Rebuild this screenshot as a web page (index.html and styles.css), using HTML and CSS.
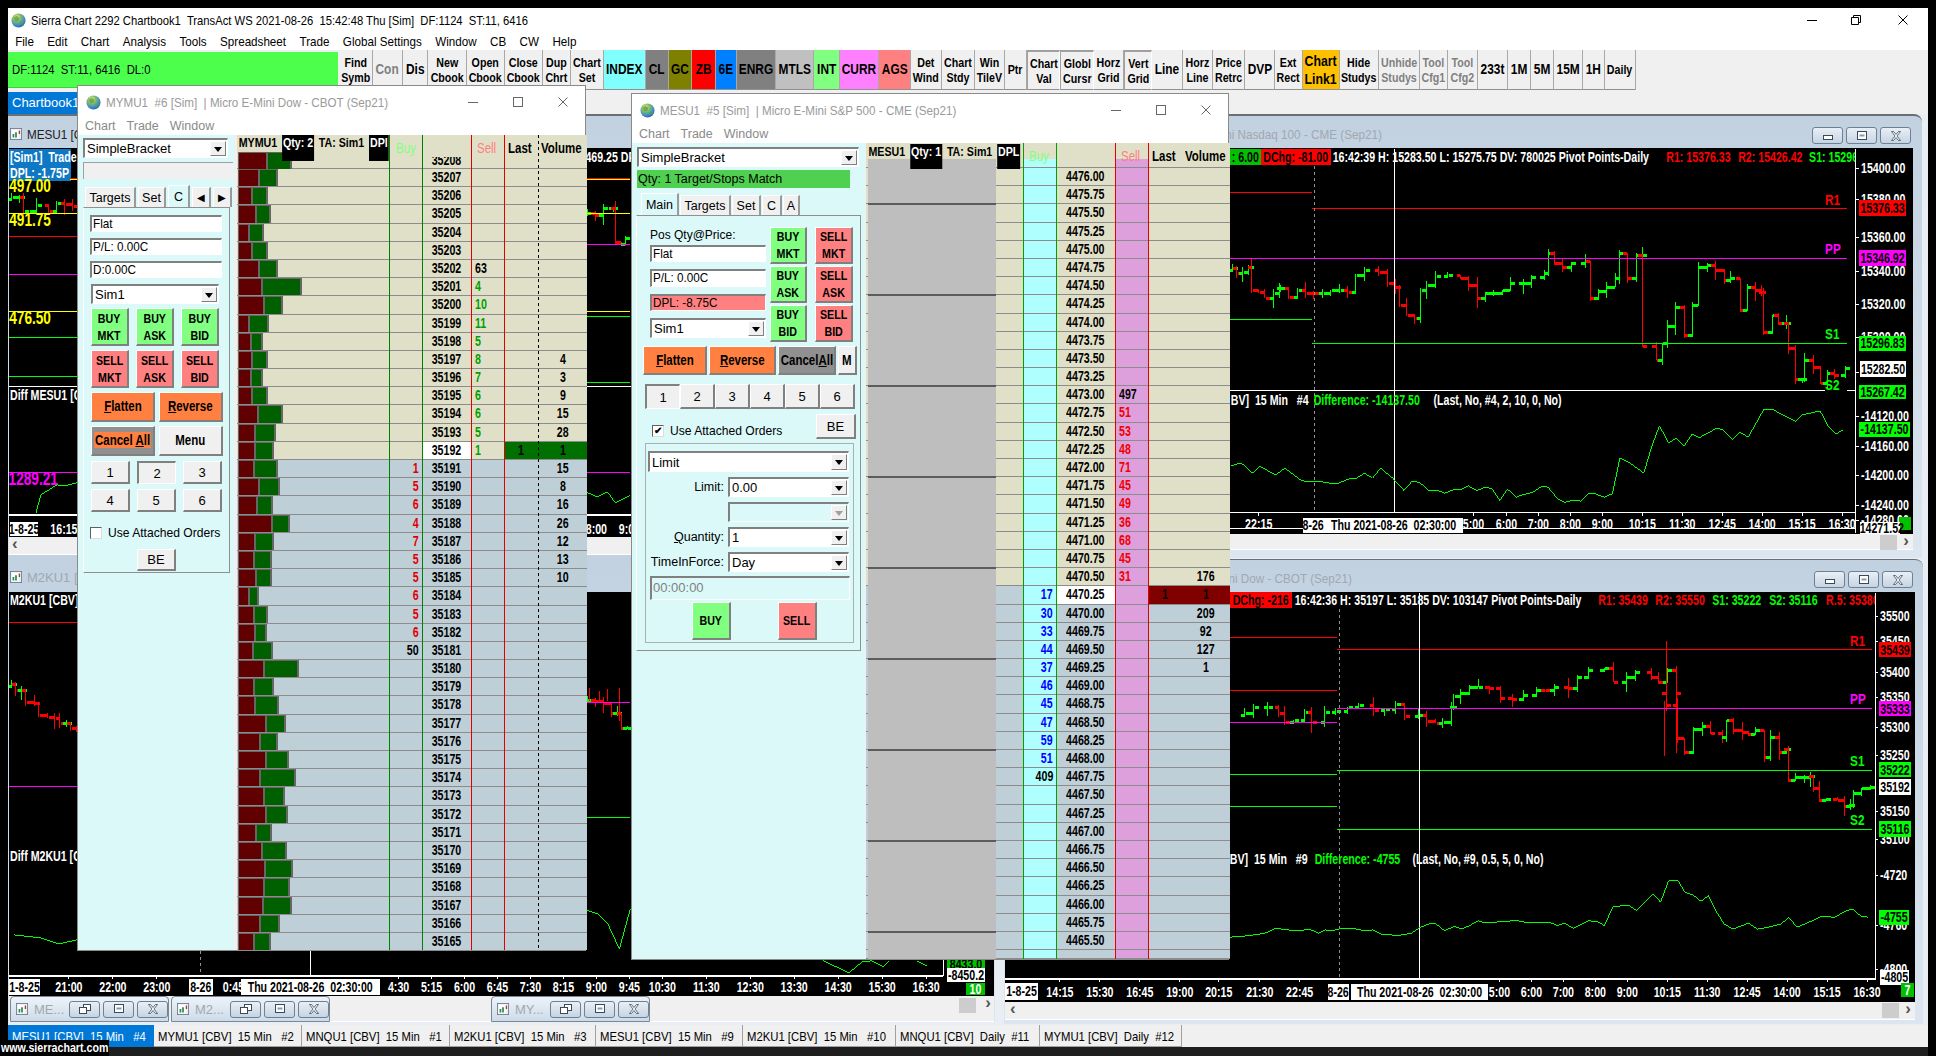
FILE: index.html
```html
<!DOCTYPE html>
<html lang="en">
<head>
<meta charset="utf-8">
<title>Sierra Chart</title>
<link rel="stylesheet" href="styles.css">
</head>
<body>
<svg class="defs" width="0" height="0">
  <defs>
    <radialGradient id="gl" cx="0.38" cy="0.28" r="0.85"><stop offset="0" stop-color="#f6f4b8"/><stop offset="0.3" stop-color="#8cc060"/><stop offset="0.65" stop-color="#3f8fc8"/><stop offset="1" stop-color="#14509c"/></radialGradient>
    <symbol id="globe" viewBox="0 0 16 16"><circle cx="8" cy="8" r="7.5" fill="url(#gl)"/><path d="M3 5l3-2 3 2-1 3-3 1zM10 10l3-1 1 1-3 3z" fill="#5aa040" opacity="0.8"/></symbol>
    <symbol id="chart-ico" viewBox="0 0 14 14"><rect x="0.5" y="0.5" width="13" height="13" fill="#e8eef4" stroke="#6a7a8a"/><rect x="2" y="2" width="8" height="10" fill="#fff"/><path d="M3 11V7h2v4zM6 11V5h2v6z" fill="#2a8a4a"/><path d="M11 3v4" stroke="#c03020" stroke-width="1.5"/></symbol>
    <symbol id="x-thin" viewBox="0 0 10 10"><path d="M0.5 0.5l9 9M9.5 0.5l-9 9" fill="none" stroke="currentColor"/></symbol>
    <symbol id="sq-thin" viewBox="0 0 10 10"><rect x="0.5" y="0.5" width="9" height="9" fill="none" stroke="currentColor"/></symbol>
    <symbol id="dash-thin" viewBox="0 0 10 10"><path d="M0 5.5h10" stroke="currentColor"/></symbol>
    <symbol id="rest-thin" viewBox="0 0 10 10"><path d="M2.5 2.5v-2h7v7h-2M0.5 2.5h7v7h-7z" fill="none" stroke="currentColor"/></symbol>
    <symbol id="m-min" viewBox="0 0 12 10"><rect x="1.5" y="4.5" width="9" height="4" fill="#fff" stroke="#3a4a5a"/></symbol>
    <symbol id="m-max" viewBox="0 0 12 10"><rect x="1.5" y="0.5" width="9" height="8" fill="#fff" stroke="#3a4a5a"/><rect x="3.5" y="3.5" width="5" height="2" fill="#8a9aaa"/></symbol>
    <symbol id="m-res" viewBox="0 0 12 10"><rect x="4.5" y="0.5" width="7" height="6" fill="#fff" stroke="#3a4a5a"/><rect x="0.5" y="3.5" width="7" height="6" fill="#fff" stroke="#3a4a5a"/></symbol>
    <symbol id="m-x" viewBox="0 0 12 10"><path d="M1.5 0.5h2l2.5 3 2.5-3h2l-3.5 4.5 3.5 4.5h-2l-2.5-3-2.5 3h-2l3.5-4.5z" fill="#fff" stroke="#3a4a5a" stroke-width="0.8"/></symbol>
  </defs>
</svg>

<div class="app">
  <header class="titlebar">
    <svg class="globe"><use href="#globe"/></svg>
    <span class="title-text">Sierra Chart 2292 Chartbook1  TransAct WS 2021-08-26  15:42:48 Thu [Sim]  DF:1124  ST:11, 6416</span>
    <div class="sys-btns">
      <svg class="sys"><use href="#dash-thin"/></svg>
      <svg class="sys"><use href="#rest-thin"/></svg>
      <svg class="sys sys-close"><use href="#x-thin"/></svg>
    </div>
  </header>
  <nav class="menubar"><div class="menu-inner"><span>File</span><span>Edit</span><span>Chart</span><span>Analysis</span><span>Tools</span><span>Spreadsheet</span><span>Trade</span><span>Global Settings</span><span>Window</span><span>CB</span><span>CW</span><span>Help</span></div></nav>
  <div class="toolrow">
    <div class="status"><span class="status-text">DF:1124  ST:11, 6416  DL:0</span></div>
    <div class="tools">
      <button>Find<br>Symb</button><button class="dim big">Con</button><button class="big">Dis</button><button>New<br>Cbook</button><button>Open<br>Cbook</button><button>Close<br>Cbook</button><button>Dup<br>Chrt</button><button>Chart<br>Set</button>
      <button class="big t-index">INDEX</button><button class="big t-gray">CL</button><button class="big t-olive">GC</button><button class="big t-red">ZB</button><button class="big t-blue">6E</button><button class="big t-gray">ENRG</button><button class="big t-silver">MTLS</button><button class="big t-green">INT</button><button class="big t-pink">CURR</button><button class="big t-salmon">AGS</button>
      <button>Det<br>Wind</button><button>Chart<br>Stdy</button><button>Win<br>TileV</button><button>Ptr</button><button class="on">Chart<br>Val</button><button class="on">Globl<br>Cursr</button><button>Horz<br>Grid</button><button class="on">Vert<br>Grid</button><button class="big">Line</button><button>Horz<br>Line</button><button>Price<br>Retrc</button><button class="big">DVP</button><button>Ext<br>Rect</button>
      <button class="link">Chart<br>Link1</button><button>Hide<br>Studys</button><button class="dim">Unhide<br>Studys</button><button class="dim">Tool<br>Cfg1</button><button class="dim">Tool<br>Cfg2</button><button class="big">233t</button><button class="big">1M</button><button class="big">5M</button><button class="big">15M</button><button class="big">1H</button><button>Daily</button>
    </div>
  </div>
  <div class="cbooktabs"><span class="cbook-active">Chartbook1</span></div>

  <main class="desktop">
    <section class="mdi win-a">
      <div class="mdi-title"><svg class="mdi-ico"><use href="#chart-ico"/></svg><span class="mdi-text on-text">MESU1 [CBV]  15 Min  #4  | Micro E-Mini S&amp;P 500 - CME (Sep21)</span></div>
      <svg class="chart chart-a" id="ca" viewBox="9 148 981 389"></svg>
      <div class="scroll scroll-a"><span class="arrow">‹</span></div>
    </section>
    <section class="mdi win-b">
      <div class="mdi-title title-b"><svg class="mdi-ico"><use href="#chart-ico"/></svg><span class="mdi-text">M2KU1 [CBV]  15 Min  #3</span></div>
      <svg class="chart chart-b" id="cb" viewBox="9 592 986 404"></svg>
      <div class="scroll scroll-b"><span class="sthumb thumb-b"></span><span class="arrow arrow-b">›</span></div>
    </section>
    <div class="mini mini-1"><svg class="mdi-ico"><use href="#chart-ico"/></svg><span class="mini-text">ME...</span><span class="capbtn"><svg><use href="#m-res"/></svg></span><span class="capbtn"><svg><use href="#m-max"/></svg></span><span class="capbtn"><svg><use href="#m-x"/></svg></span></div>
    <div class="mini mini-2"><svg class="mdi-ico"><use href="#chart-ico"/></svg><span class="mini-text">M2...</span><span class="capbtn"><svg><use href="#m-res"/></svg></span><span class="capbtn"><svg><use href="#m-max"/></svg></span><span class="capbtn"><svg><use href="#m-x"/></svg></span></div>
    <div class="mini mini-3"><svg class="mdi-ico"><use href="#chart-ico"/></svg><span class="mini-text">MY...</span><span class="capbtn"><svg><use href="#m-res"/></svg></span><span class="capbtn"><svg><use href="#m-max"/></svg></span><span class="capbtn"><svg><use href="#m-x"/></svg></span></div>

    <section class="mdi win-c">
      <div class="mdi-title title-c"><span class="mdi-text text-c">MNQU1 [CBV]  15 Min  #1  | Micro E-Mini Nasdaq 100 - CME (Sep21)</span><span class="capbtns"><span class="capbtn"><svg><use href="#m-min"/></svg></span><span class="capbtn"><svg><use href="#m-max"/></svg></span><span class="capbtn"><svg><use href="#m-x"/></svg></span></span></div>
      <svg class="chart chart-c" id="cc" viewBox="1004 148 909 386"></svg>
      <div class="scroll scroll-c"><span class="sthumb thumb-c"></span><span class="arrow">›</span></div>
    </section>
    <section class="mdi win-d">
      <div class="mdi-title title-d"><span class="mdi-text text-d">MYMU1 [CBV]  15 Min  #2  | Micro E-Mini Dow - CBOT (Sep21)</span><span class="capbtns"><span class="capbtn"><svg><use href="#m-min"/></svg></span><span class="capbtn"><svg><use href="#m-max"/></svg></span><span class="capbtn"><svg><use href="#m-x"/></svg></span></span></div>
      <svg class="chart chart-d" id="cd" viewBox="1004 592 911 410"></svg>
      <div class="scroll scroll-d"><span class="arrow">‹</span><span class="sthumb thumb-d"></span><span class="arrow">›</span></div>
    </section>

    <section class="float float-my">
      <div class="ftitle"><svg class="globe"><use href="#globe"/></svg><span class="ftext">MYMU1  #6 [Sim]  | Micro E-Mini Dow - CBOT (Sep21)</span><span class="fbtns"><svg class="sys"><use href="#dash-thin"/></svg><svg class="sys"><use href="#sq-thin"/></svg><svg class="sys"><use href="#x-thin"/></svg></span></div>
      <div class="fmenu"><span>Chart</span><span>Trade</span><span>Window</span></div>
      <div class="fclient">
        <aside class="panel panel-my">
          <div class="combo cmb-my1">SimpleBracket<i class="drop"></i></div>
          <div class="blank-my"></div>
          <div class="tabs tabs-my"><span class="tab t-targets">Targets</span><span class="tab t-set">Set</span><span class="tab tab-on t-c">C</span><span class="tab t-arrow">◀</span><span class="tab t-arrow">▶</span></div>
          <div class="grp grp-my">
            <div class="edit"><span class="et">Flat</span></div>
            <div class="edit"><span class="et">P/L: 0.00C</span></div>
            <div class="edit"><span class="et">D:0.00C</span></div>
            <div class="combo cmb-my2">Sim1<i class="drop"></i></div>
            <div class="btnrow row-buy"><button class="tbtn buy">BUY<br>MKT</button><button class="tbtn buy">BUY<br>ASK</button><button class="tbtn buy">BUY<br>BID</button></div>
            <div class="btnrow row-sell"><button class="tbtn sell">SELL<br>MKT</button><button class="tbtn sell">SELL<br>ASK</button><button class="tbtn sell">SELL<br>BID</button></div>
            <div class="btnrow two row-act"><button class="tbtn orange"><u>F</u>latten</button><button class="tbtn orange"><u>R</u>everse</button></div>
            <div class="btnrow two row-act"><button class="tbtn grayb"><b class="orange-txt">Cancel <u>A</u>ll</b></button><button class="tbtn plain">Menu</button></div>
            <div class="numgrid"><button class="nb">1</button><button class="nb nb-on">2</button><button class="nb">3</button><button class="nb">4</button><button class="nb">5</button><button class="nb">6</button></div>
            <label class="check check-my"><i class="cbx"></i><span class="check-text">Use Attached Orders</span></label>
            <button class="nb be-my">BE</button>
          </div>
        </aside>
        <div class="ladder lad-my" id="ladmy">
          <div class="lhead">
            <div class="lgroup"><b>MYMU1</b><b class="blk">Qty: 2</b><b>TA: Sim1</b><b class="blk">DPl</b></div>
            <div class="lh-buy">Buy</div><div></div><div class="lh-sell">Sell</div><div class="lh-last">Last</div><div class="lh-vol">Volume</div>
          </div>
          <i class="vl my-1"></i><i class="vl my-2"></i><i class="vl vr my-3"></i><i class="vl vr my-4"></i><i class="vl vd my-5"></i>
        </div>
      </div>
    </section>

    <section class="float float-es">
      <div class="ftitle"><svg class="globe"><use href="#globe"/></svg><span class="ftext">MESU1  #5 [Sim]  | Micro E-Mini S&amp;P 500 - CME (Sep21)</span><span class="fbtns"><svg class="sys"><use href="#dash-thin"/></svg><svg class="sys"><use href="#sq-thin"/></svg><svg class="sys"><use href="#x-thin"/></svg></span></div>
      <div class="fmenu"><span>Chart</span><span>Trade</span><span>Window</span></div>
      <div class="fclient">
        <aside class="panel panel-es">
          <div class="combo cmb-es1">SimpleBracket<i class="drop"></i></div>
          <div class="qtybar">Qty: 1 Target/Stops Match</div>
          <div class="tabs tabs-es"><span class="tab tab-on t-main">Main</span><span class="tab t-tg2">Targets</span><span class="tab t-set2">Set</span><span class="tab t-c2">C</span><span class="tab t-a2">A</span></div>
          <div class="grp grp-es">
            <div class="es-top">
              <div class="es-fields">
                <div class="lbl-pos">Pos Qty@Price:</div>
                <div class="edit es-flat"><span class="et">Flat</span></div>
                <div class="edit es-pl"><span class="et">P/L: 0.00C</span></div>
                <div class="edit es-dpl"><span class="et">DPL: -8.75C</span></div>
                <div class="combo cmb-es2">Sim1<i class="drop"></i></div>
              </div>
              <div class="es-btns">
                <button class="tbtn buy">BUY<br>MKT</button><button class="tbtn sell">SELL<br>MKT</button>
                <button class="tbtn buy">BUY<br>ASK</button><button class="tbtn sell">SELL<br>ASK</button>
                <button class="tbtn buy">BUY<br>BID</button><button class="tbtn sell">SELL<br>BID</button>
              </div>
            </div>
            <div class="es-act"><button class="tbtn orange"><u>F</u>latten</button><button class="tbtn orange"><u>R</u>everse</button><button class="tbtn grayb">Cancel<u>A</u>ll</button><button class="tbtn plain">M</button></div>
            <div class="es-nums"><button class="nb nb-on">1</button><button class="nb">2</button><button class="nb">3</button><button class="nb">4</button><button class="nb">5</button><button class="nb">6</button></div>
            <div class="es-attach"><label class="check check-es"><i class="cbx cbx-on">✔</i><span class="check-text">Use Attached Orders</span></label><button class="nb be-es">BE</button></div>
            <div class="order">
              <div class="combo cmb-type">Limit<i class="drop"></i></div>
              <div class="ofield"><span class="olabel">Limit:</span><div class="combo">0.00<i class="drop"></i></div></div>
              <div class="ofield"><span class="olabel"></span><div class="combo combo-off"><i class="drop"></i></div></div>
              <div class="ofield"><span class="olabel"><u>Q</u>uantity:</span><div class="combo">1<i class="drop"></i></div></div>
              <div class="ofield"><span class="olabel">TimeInForce:</span><div class="combo">Day<i class="drop"></i></div></div>
              <div class="edit edit-off">00:00:00</div>
              <div class="osend"><button class="tbtn buy big-send">BUY</button><button class="tbtn sell big-send">SELL</button></div>
            </div>
          </div>
        </aside>
        <div class="ladder lad-es" id="lades">
          <div class="lhead">
            <div class="lgroup"><b>MESU1</b><b class="blk">Qty: 1</b><b>TA: Sim1</b><b class="blk">DPL</b></div>
            <div class="lh-buy">Buy</div><div></div><div class="lh-sell">Sell</div><div class="lh-last">Last</div><div class="lh-vol">Volume</div>
          </div>
          <div class="depth"></div>
          <i class="vl es-1"></i><i class="vl es-2"></i><i class="vl vr es-3"></i><i class="vl vr es-4"></i>
        </div>
      </div>
    </section>
  </main>

  <div class="charttabs">
    <span class="ctab ctab-on">MESU1 [CBV]  15 Min   #4</span><span class="ctab">MYMU1 [CBV]  15 Min   #2</span><span class="ctab">MNQU1 [CBV]  15 Min   #1</span><span class="ctab">M2KU1 [CBV]  15 Min   #3</span><span class="ctab">MESU1 [CBV]  15 Min   #9</span><span class="ctab">M2KU1 [CBV]  15 Min   #10</span><span class="ctab">MNQU1 [CBV]  Daily  #11</span><span class="ctab">MYMU1 [CBV]  Daily  #12</span>
  </div>
  <div class="darkstrip"></div>
</div>
<div class="site"><span>www.sierrachart.com</span></div>
<script src="app.js"></script>
</body>
</html>
```
FILE: styles.css
```css
:root {
  --ui: "Liberation Sans", Arial, sans-serif;
  --cyan: #dcf9f9;
  --face: #f0f0f0;
  --narrow: 0.82;
}
* { box-sizing: border-box; }
html, body { margin: 0; height: 100%; background: #000; overflow: hidden; }
body { font: 13px var(--ui); color: #000; width: 1936px; height: 1056px; position: relative; }
.defs { position: absolute; }
button { font: inherit; margin: 0; padding: 0; color: inherit; cursor: default; }

/* condensed text: no narrow family is installed, so glyphs are squeezed horizontally */
.nx { display: inline-block; transform: scaleX(var(--narrow)); white-space: pre; flex: none; }
.nx-l { transform-origin: left center; }
.nx-r { transform-origin: right center; }

.app { margin: 8px 8px 0; width: 1920px; height: 1048px; background: var(--face); display: flex; flex-direction: column; }
.titlebar { height: 24px; background: #fff; display: flex; align-items: center; padding-left: 3px; flex: none; }
.globe { width: 15px; height: 15px; flex: none; }
.title-text { margin-left: 5px; font-size: 13px; white-space: pre; transform: scaleX(0.864); transform-origin: left center; }
.sys-btns { margin-left: auto; display: flex; gap: 34px; margin-right: 20px; color: #000; }
.sys { width: 10px; height: 10px; flex: none; }
.sys-close { margin-left: 3px; }
.menubar { height: 18px; background: #fff; flex: none; }
.menu-inner { display: flex; gap: 15px; padding-left: 8px; align-items: center; height: 18px; font-size: 13px; transform: scaleX(0.895); transform-origin: left center; }
.toolrow { height: 40px; display: flex; flex: none; }
.status { width: 330px; margin: 2px 0; background: #4cff4c; padding-left: 4px; line-height: 36px; white-space: pre; border-bottom: 1px solid #40d040; }
.status-text { display: inline-block; transform: scaleX(0.87); transform-origin: left center; }
.tools { margin-left: 2px; display: grid; grid-template-columns: 33px 30px 25px 39px 38px 38px 28px 33px 42px 23px 23px 24px 21px 39px 38px 26px 39px 32px 31px 33px 30px 22px 33px 34px 30px 28px 31px 30px 32px 30px 28px 37px 39px 41px 28px 30px 30px 23px 23px 29px 22px 31px; height: 40px; }
.tools button { display: flex; align-items: center; justify-content: center; font: 700 13px/15px var(--ui); background: var(--face); border: 0; border-right: 1px solid #a8a8a8; border-bottom: 1px solid #909090; overflow: hidden; text-align: center; }
.tools .big { font-size: 14.5px; }
.tools .dim { color: #808080; }
.tools .on { background: #f0f0f0; border-top: 2px solid #a0a0a0; border-left: 1px solid #a0a0a0; border-right: 1px solid #fff; }
.tools .t-index { background: #80ffff; }
.tools .t-gray { background: #808080; }
.tools .t-olive { background: #808000; }
.tools .t-red { background: #ff0000; }
.tools .t-blue { background: #0080ff; }
.tools .t-silver { background: #c0c0c0; }
.tools .t-green { background: #80ff80; }
.tools .t-pink { background: #ff80ff; }
.tools .t-salmon { background: #ff8080; }
.tools .link { background: #ffc000; font-size: 15px; line-height: 18px; }

.cbooktabs { height: 24px; padding-top: 2px; flex: none; }
.cbook-active { display: block; width: 90px; height: 22px; background: #0078d7; color: #fff; line-height: 22px; padding-left: 4px; font-size: 13px; }

.desktop { flex: none; height: 911px; position: relative; background: #e8eef4; }
.charttabs { height: 22px; flex: none; display: grid; grid-template-columns: 146px 148px 148px 146px 147px 153px 144px 142px; background: var(--face); }
.ctab { white-space: pre; padding-left: 4px; line-height: 23px; border-right: 1px solid #a0a0a0; border-bottom: 1px solid #a0a0a0; overflow: hidden; background: var(--face); --narrow: 0.87; }
.ctab-on { background: #0078d7; color: #fff; border: 0; }
.darkstrip { flex: none; height: 9px; background: #1e1e1e; }
.site { position: absolute; left: 0; bottom: 0; width: 109px; height: 16px; background: #000; color: #fff; font: 700 13px/16px var(--ui); padding-left: 1px; white-space: pre; }
.site span { display: inline-block; transform: scaleX(0.82); transform-origin: left center; }

/* MDI child windows */
.mdi { position: absolute; display: flex; flex-direction: column; background: linear-gradient(#c2d1e0, #dbe6f0); border-top: 2px solid #6a6f75; padding: 0 1px; }
.win-a { left: 0; top: 0; width: 982px; height: 441px; }
.win-b { left: 0; top: 441px; width: 987px; height: 467px; border-top: 0; }
.win-c { left: 996px; top: 0; width: 918px; height: 444px; border-radius: 0 8px 0 0; padding-right: 9px; }
.win-d { left: 996px; top: 445px; width: 919px; height: 465px; border-radius: 0 8px 0 0; border-top-width: 1px; padding-right: 8px; }
.mdi-title { height: 32px; flex: none; display: flex; align-items: center; padding: 4px 0 0 1px; position: relative; }
.title-b { height: 37px; padding-top: 7px; }
.mdi-ico { width: 12px; height: 12px; flex: none; }
.mdi-text { margin-left: 5px; color: #a0a8b0; white-space: pre; font-size: 13px; }
.on-text { color: #202020; transform: scaleX(0.9); transform-origin: left center; }
.text-c { position: absolute; right: 531px; transform: scaleX(0.9); transform-origin: right center; }
.text-d { position: absolute; right: 563px; transform: scaleX(0.9); transform-origin: right center; }
.capbtns { position: absolute; right: 2px; top: 11px; display: flex; gap: 3px; }
.capbtn { width: 31px; height: 17px; flex: none; display: flex; align-items: center; justify-content: center; border: 1px solid #6e8094; border-radius: 3px; background: linear-gradient(#e8eff6, #c6d4e2); }
.capbtn svg { width: 12px; height: 10px; }
.chart { display: block; background: #000; flex: none; shape-rendering: crispEdges; }
.chart-a { width: 980px; height: 389px; }
.chart-b { width: 985px; height: 404px; }
.chart-c { width: 908px; height: 386px; }
.chart-d { width: 910px; height: 410px; }
.scroll { flex: none; height: 18px; background: var(--face); position: relative; border-bottom: 1px solid #fff; }
.scroll-b { height: 26px; }
.scroll-c { height: 16px; }
.arrow { position: absolute; left: 3px; top: -3px; font: 700 17px/20px var(--ui); color: #555; }
.scroll-c .arrow { left: auto; right: 4px; }
.arrow-b { left: auto; right: 3px; }
.scroll-d .arrow:first-child { left: 5px; }
.scroll-d .arrow:last-child { left: auto; right: 4px; }
.sthumb { position: absolute; top: 1px; height: 15px; width: 17px; background: #cdcdcd; }
.thumb-b { right: 18px; top: 2px; }
.thumb-c { right: 16px; }
.thumb-d { right: 16px; }

.mini { position: absolute; top: 882px; height: 26px; width: 159px; display: flex; align-items: center; gap: 3px; padding-left: 5px; background: linear-gradient(#eef3f8, #cddbe9); border: 1px solid #7a8794; border-radius: 4px 4px 0 0; }
.mini-1 { left: 2px; }
.mini-2 { left: 163px; }
.mini-3 { left: 483px; }
.mini-text { color: #a0a8b0; width: 34px; margin-left: 3px; font-size: 13px; }

/* floating windows */
.float { position: absolute; background: #fff; border: 1px solid #8a8a8a; display: flex; flex-direction: column; }
.float-my { left: 69px; top: -29px; width: 509px; height: 866px; }
.float-es { left: 623px; top: -21px; width: 598px; height: 867px; }
.ftitle { height: 32px; flex: none; display: flex; align-items: center; padding-left: 8px; }
.ftext { margin-left: 5px; color: #9a9a9a; font-size: 13px; white-space: pre; transform: scaleX(0.895); transform-origin: left center; }
.fbtns { margin-left: auto; display: flex; gap: 35px; margin-right: 17px; color: #666; }
.fmenu { height: 17px; flex: none; display: flex; gap: 11px; padding-left: 7px; color: #8a8a8a; font-size: 12.5px; line-height: 16px; }
.fclient { flex: 1; min-height: 0; display: flex; background: #f0f0f0; }

/* order panels */
.panel { flex: none; background: var(--cyan); font-size: 13px; display: flex; flex-direction: column; align-items: flex-start; }
.panel-my { width: 156px; padding: 3px 0 0 5px; }
.panel-es { width: 233px; padding: 4px 0 0 4px; }
.combo { display: flex; align-items: center; background: #fff; border: 1px solid; border-color: #808080 #fff #fff #808080; border-top-width: 2px; border-left-width: 2px; padding-left: 2px; height: 20px; position: relative; white-space: pre; overflow: hidden; }
.drop { position: absolute; right: 1px; top: 1px; bottom: 1px; width: 16px; background: var(--face); border: 1px solid; border-color: #fff #808080 #808080 #fff; }
.drop::after { content: ""; position: absolute; left: 3px; top: 5px; border: 4px solid transparent; border-top: 5px solid #000; border-bottom: 0; }
.combo-off { background: var(--cyan); }
.combo-off .drop::after { border-top-color: #a0a0a0; }
.cmb-my1 { width: 145px; }
.blank-my { width: 150px; height: 17px; margin-top: 4px; background: var(--face); border-left: 1px solid #a0a0a0; border-top: 1px solid #a0a0a0; }
.tabs { display: flex; align-items: flex-end; }
.tabs-my { height: 22px; margin: 6px 0 0 2px; gap: 2px; }
.tab { display: flex; align-items: center; justify-content: center; background: var(--face); height: 20px; border-top: 1px solid #fff; border-left: 1px solid #fff; border-right: 2px solid #9a9a9a; font-size: 12.5px; }
.tab-on { height: 22px; background: var(--cyan); }
.t-targets { width: 51px; }
.t-set { width: 28px; }
.t-c { width: 22px; }
.t-arrow { width: 19px; margin-left: 0; font-size: 10px; }
.grp { border: 1px solid; border-color: #fff #909090 #909090 #fff; border-top: 1px solid #909090; }
.grp-my { width: 147px; height: 366px; padding: 7px 0 0 6px; display: flex; flex-direction: column; align-items: flex-start; }
.edit { width: 132px; height: 17px; background: #fff; border: 1px solid; border-color: #808080 #fff #fff #808080; border-top-width: 2px; border-left-width: 2px; line-height: 14px; padding-left: 1px; white-space: pre; margin-bottom: 6px; }
.et { display: inline-block; transform: scaleX(0.9); transform-origin: left center; }
.cmb-my2 { width: 128px; margin-left: 1px; }
.btnrow { display: flex; gap: 7px; margin-left: 1px; }
.tbtn { display: flex; align-items: center; justify-content: center; border: 1px solid; border-color: #fff #808080 #808080 #fff; border-right-width: 2px; border-bottom-width: 2px; font: 700 13px/17px var(--ui); text-align: center; overflow: hidden; }
.buy { background: #80ff80; }
.sell { background: #ff8080; }
.orange { background: #ff8040; font-size: 14px; }
.grayb { background: #909090; font-size: 14px; }
.plain { background: var(--face); font-size: 14px; }
.orange-txt { background: #ff8040; padding: 0 1px; }
.row-buy { margin-top: 4px; }
.row-buy .tbtn, .row-sell .tbtn { width: 38px; height: 38px; }
.row-sell { margin-top: 4px; }
.row-act { margin-top: 4px; gap: 4px; }
.row-act .tbtn { width: 64px; height: 30px; }
.numgrid { display: grid; grid-template-columns: repeat(3, 39px); column-gap: 7px; row-gap: 5px; margin: 5px 0 0 1px; }
.nb { background: var(--face); border: 1px solid; border-color: #fff #808080 #808080 #fff; border-right-width: 2px; border-bottom-width: 2px; height: 23px; font-size: 13px; }
.nb-on { border-color: #808080 #fff #fff #808080; border-width: 2px 1px 1px 2px; }
.check { display: flex; align-items: center; white-space: nowrap; }
.check-my { margin-top: 13px; }
.check-es { margin-top: 8px; }
.check-text { display: inline-block; transform: scaleX(0.93); transform-origin: left center; }
.cbx { width: 12px; height: 12px; flex: none; background: #fff; border: 1px solid #606060; border-right-color: #ddd; border-bottom-color: #ddd; margin-right: 6px; font: 700 10px/10px var(--ui); text-align: center; font-style: normal; }
.be-my { width: 39px; height: 22px; margin: 9px 0 0 47px; }

/* ES panel */
.cmb-es1 { width: 222px; margin-left: 1px; }
.qtybar { width: 213px; height: 18px; margin: 3px 0 0 1px; background: #50d050; line-height: 18px; padding-left: 1px; font-size: 12.5px; }
.tabs-es { height: 22px; margin: 5px 0 0 5px; gap: 1px; }
.t-main { width: 38px; }
.t-tg2 { width: 51px; }
.t-set2 { width: 29px; }
.t-c2 { width: 20px; }
.t-a2 { width: 17px; }
.grp-es { width: 225px; height: 436px; padding: 11px 0 0 6px; display: flex; flex-direction: column; align-items: flex-start; }
.es-top { display: flex; }
.es-fields { width: 120px; margin-left: 7px; display: flex; flex-direction: column; align-items: flex-start; }
.lbl-pos { height: 18px; line-height: 16px; white-space: pre; font-size: 12px; }
.es-flat { width: 116px; margin-bottom: 7px; }
.es-pl { width: 116px; height: 18px; margin-bottom: 7px; }
.es-dpl { width: 116px; background: #ff8080; margin-bottom: 7px; }
.cmb-es2 { width: 116px; }
.es-btns { display: grid; grid-template-columns: 37px 38px; column-gap: 8px; grid-auto-rows: 37px; row-gap: 2px; }
.es-act { display: grid; grid-template-columns: 64px 67px 58px 19px; column-gap: 2px; margin-top: 4px; height: 29px; }
.es-nums { display: grid; grid-template-columns: repeat(6, 35px); margin: 9px 0 0 2px; }
.es-nums .nb { height: 25px; }
.es-attach { display: flex; width: 204px; align-items: center; justify-content: space-between; margin: 5px 0 0 9px; height: 25px; }
.be-es { width: 40px; height: 25px; }
.order { width: 209px; height: 200px; margin: 4px 0 0 2px; border: 1px solid #a8b0b0; padding: 7px 0 0 2px; display: flex; flex-direction: column; }
.cmb-type { width: 201px; height: 21px; margin-bottom: 5px; }
.ofield { display: flex; align-items: center; gap: 4px; height: 20px; margin-bottom: 5px; }
.ofield .combo { width: 121px; height: 20px; }
.olabel { width: 76px; text-align: right; white-space: nowrap; font-size: 12.5px; flex: none; }
.edit-off { width: 200px; height: 24px; background: var(--cyan); color: #808080; line-height: 20px; margin: -1px 0 2px 2px; }
.osend { display: flex; gap: 47px; margin-left: 44px; }
.big-send { width: 39px; height: 38px; }

/* ladders */
.ladder { position: relative; flex: none; overflow: hidden; }
.lad-my { width: 350px; margin-left: 3px; }
.lad-es { width: 364px; margin-left: 1px; }
.lhead, .row { display: grid; }
.lad-my .lhead, .lad-my .row { grid-template-columns: 153px 32px 49px 33px 34px 49px; }
.lad-es .lhead, .lad-es .row { grid-template-columns: 157px 33px 59px 33px 34px 48px; }
.lhead { height: 17px; background: #e0e0c8; font: 700 14px/26px var(--ui); position: relative; z-index: 2; }
.lad-es .lhead { height: 16px; }
.lgroup { display: flex; gap: 6px; padding-left: 2px; font: 700 13px/16px var(--ui); overflow: hidden; white-space: nowrap; width: 186px; transform: scaleX(var(--narrow)); transform-origin: left center; }
.lad-es .lgroup { width: 191px; padding: 1px 0 0 3px; }
.blk { background: #000; color: #fff; padding: 0 1px; }
.lh-buy { color: #80ff80; padding-left: 6px; font-weight: 400; }
.lh-sell { color: #ff8080; padding-left: 6px; font-weight: 400; }
.lh-last { padding-left: 4px; }
.lh-vol { padding-left: 3px; }
.row { height: 18.19px; border-bottom: 1px solid #8c8c8c; font: 700 14px/17px var(--ui); --narrow: 0.76; }
.row.part { height: 9px; }
.row.first { height: 17px; }
.row.a { background: #e0e0c8; }
.row.b { background: #bfcfd7; }
.row > div { min-width: 0; white-space: nowrap; }
.bars { display: flex; padding-left: 1px; }
.bars i { display: block; height: 100%; border: 1px solid #666; border-bottom-width: 0; }
.bars .r { background: #600000; }
.bars .g { background: #006000; border-right-width: 2px; }
.c-buy { text-align: right; padding-right: 3px; color: #e00000; }
.c-price { text-align: center; }
.c-price.hot { background: #fff; }
.c-sell { padding-left: 4px; color: #00a000; }
.c-last, .c-vol { text-align: center; }
.c-last.fill-g, .c-vol.fill-g { background: #007000; }
.c-last.fill-r, .c-vol.fill-r { background: #800000; }
.lad-es .c-buy { background: #b0ffff; color: #0000ff; }
.lad-es .c-sell { background: #dda0dd; color: #f00000; }
.lad-es .dark, .lad-my .dark { color: #000; }
.clip { clip-path: inset(5px 0 0 0); }
.vl { position: absolute; top: 0; bottom: 0; width: 1px; background: #00a000; z-index: 3; }
.vr { background: #e00000; }
.vd { background: repeating-linear-gradient(#000 0 3px, transparent 3px 6px); }
.my-1 { left: 152px; background: #008000; }
.my-2 { left: 185px; background: #008000; }
.my-3 { left: 234px; }
.my-4 { left: 267px; }
.my-5 { left: 301px; }
.es-1 { left: 157px; }
.es-2 { left: 190px; }
.es-3 { left: 249px; }
.es-4 { left: 282px; }
.depth { position: absolute; left: 2px; top: 16px; width: 128px; bottom: 0; background: repeating-linear-gradient(#bebebe 0 44px, #5c5c5c 44px 46px, #bebebe 46px 91px); z-index: 1; }
/* chart text */
.ct { font: 700 14px var(--ui); white-space: pre; shape-rendering: auto; }
.ct-l { font-size: 15.5px; }
.ct-xl { font-size: 18px; }
```
FILE: app.js
```js
(function () {
  var NS = 'http://www.w3.org/2000/svg';
  var K = 0.76;
  function add(s, tag, a, txt) {
    var e = document.createElementNS(NS, tag);
    for (var k in a) e.setAttribute(k, a[k]);
    if (txt != null) e.textContent = txt;
    s.appendChild(e);
    return e;
  }
  var GRN = '#00ff00', RED = '#ff0000', MAG = '#ff00ff', YEL = '#ffff00', WHT = '#ffffff';
  function L(s, x1, y1, x2, y2, c, dash) {
    var a = { x1: x1, y1: y1 + 0.5, x2: x2, y2: y2 + 0.5, stroke: c, 'stroke-width': 1 };
    if (dash) a['stroke-dasharray'] = dash;
    return add(s, 'line', a);
  }
  function T(s, x, cy, t, c, anchor, cls) {
    var e = add(s, 'text', { x: x, y: cy + 5, fill: c || WHT, 'text-anchor': anchor || 'start', 'class': 'ct ' + (cls || '') }, t);
    e.setAttribute('textLength', (e.getComputedTextLength() * K).toFixed(1));
    e.setAttribute('lengthAdjust', 'spacingAndGlyphs');
    return e;
  }
  function R(s, x, y, w, h, c) { return add(s, 'rect', { x: x, y: y, width: w, height: h, fill: c }); }
  function Box(s, x, y, w, h, c, t, tc) {
    R(s, x, y, w, h, c);
    T(s, x + w / 2, y + h / 2, t, tc || '#000', 'middle');
  }
  function poly(s, pts, c) {
    add(s, 'polyline', { points: pts.map(function (p) { return p[0].toFixed(1) + ',' + p[1].toFixed(1); }).join(' '), fill: 'none', stroke: c || GRN, 'stroke-width': 1 });
  }
  function map(list, ox, kx, oy) { return list.map(function (p) { return [ox + p[0] / kx, oy + p[1] / 3]; }); }
  /* keep one bar about every 8 px, as the traced points are sometimes sparser */
  function dense(pts) {
    var out = [];
    pts.forEach(function (p, i) {
      if (i) {
        var q = pts[i - 1], n = Math.floor((p[0] - q[0]) / 8);
        for (var j = 1; j < n; j++) {
          out.push([q[0] + (p[0] - q[0]) * j / n, q[1] + (p[1] - q[1]) * j / n + (j % 2 ? 2 : -2)]);
        }
      }
      out.push(p);
    });
    return out;
  }
  /* OHLC bars: high-low stem, open tick on the left, close tick on the right */
  function candles(s, pts) {
    pts.forEach(function (p, i) {
      var prev = i ? pts[i - 1][1] : p[1] + 2;
      var c = p[1] <= prev ? GRN : RED;
      var top = Math.min(p[1], prev) - ((i * 7) % 5) - (i % 4 === 0 ? 5 : 1);
      var bot = Math.max(p[1], prev) + ((i * 5) % 6) + (i % 5 === 2 ? 5 : 0);
      var x = Math.round(p[0]);
      L(s, x, top, x, bot, c);
      R(s, x - 4, Math.round(prev) - 1, 4, 3, c);
      R(s, x + 1, Math.round(p[1]) - 1, 4, 3, c);
    });
  }

  /* ---------- Chart A: MESU1 (mostly covered) ---------- */
  var a = document.getElementById('ca');
  candles(a, [[12,197],[20,197],[24,211],[29,211],[37,205],[49,211],[57,203],[65,204],[73,206]]);
  candles(a, [[588,213],[596,215],[604,208],[614,208],[616,242],[622,244],[626,238]]);
  R(a, 9, 149, 62, 16, '#0f78c4'); R(a, 9, 165, 62, 16, '#0f78c4');
  T(a, 10, 157, '[Sim1]  Trade'); T(a, 10, 173, 'DPL: -1.75P');
  T(a, 586, 157, '469.25 DPL');
  L(a, 70, 178, 77, 178, RED); L(a, 70, 179, 77, 179, YEL);
  L(a, 586, 178, 631, 178, RED); L(a, 586, 179, 631, 179, YEL);
  L(a, 9, 213, 77, 213, YEL); L(a, 586, 213, 631, 213, YEL);
  T(a, 51, 187, '4497.00', YEL, 'end', 'ct-xl'); T(a, 51, 221, '4491.75', YEL, 'end', 'ct-xl');
  L(a, 9, 236, 77, 236, RED); L(a, 9, 274, 77, 274, MAG); L(a, 586, 244, 631, 244, MAG);
  L(a, 9, 311, 77, 311, YEL); L(a, 586, 311, 631, 311, YEL);
  T(a, 51, 319, '4476.50', YEL, 'end', 'ct-xl');
  L(a, 9, 337, 77, 337, GRN); L(a, 586, 316, 631, 316, GRN);
  L(a, 9, 376, 77, 376, GRN); L(a, 586, 382, 631, 382, GRN);
  L(a, 9, 386, 990, 386, WHT);
  T(a, 10, 395, 'Diff MESU1 [CBV]');
  L(a, 9, 472, 77, 472, MAG); L(a, 586, 472, 631, 472, MAG);
  T(a, 58, 480, '-1289.21', MAG, 'end', 'ct-xl');
  poly(a, [[36,513],[41,495],[57,485],[65,486],[77,483]]);
  poly(a, [[586,492],[598,497],[608,492],[616,503],[628,497],[631,495]]);
  L(a, 9, 514, 990, 514, WHT); L(a, 9, 515, 990, 515, WHT);
  Box(a, 10, 522, 28, 14, WHT, '1-8-25');
  T(a, 64, 529, '16:15', WHT, 'middle'); T(a, 597, 529, '8:00', WHT, 'middle'); T(a, 630, 529, '9:00', WHT, 'middle');

  /* ---------- Chart B: M2KU1 ---------- */
  var b = document.getElementById('cb');
  T(b, 10, 600, 'M2KU1 [CBV]');
  L(b, 9, 622, 77, 622, RED);
  candles(b, [[12,684],[16,690],[22,690],[26,702],[35,703],[39,715],[48,717],[55,718],[60,723],[67,723],[71,728],[77,730]]);
  candles(b, [[588,700],[596,701],[604,703],[612,713],[618,713],[622,728],[628,728]]);
  L(b, 590, 687, 590, 700, RED); L(b, 600, 690, 600, 702, RED); L(b, 608, 688, 608, 700, RED); L(b, 620, 687, 620, 720, RED);
  L(b, 9, 786, 77, 786, MAG); L(b, 586, 702, 631, 702, MAG);
  L(b, 586, 817, 631, 817, GRN);
  T(b, 10, 856, 'Diff M2KU1 [CBV]');
  poly(b, [[14,935],[31,937],[41,938],[59,944],[77,940]]);
  poly(b, [[586,910],[598,914],[608,923],[620,949],[631,909]]);
  poly(b, [[824,961],[850,973],[863,962],[873,961],[884,967],[890,961]]);
  poly(b, [[918,961],[928,966]]);
  L(b, 201, 951, 201, 975, '#909090', '3 3');
  L(b, 311, 951, 311, 975, WHT);
  L(b, 9, 975, 944, 975, WHT); L(b, 9, 976, 944, 976, WHT);
  L(b, 944, 960, 944, 976, WHT);
  [['21:00',69],['22:00',113],['23:00',157],['4:30',399],['5:15',432],['6:00',465],['6:45',498],['7:30',531],['8:15',564],['9:00',597],['9:45',630],['10:30',663],['11:30',707],['12:30',751],['13:30',795],['14:30',839],['15:30',883],['16:30',927]].forEach(function (t) {
    T(b, t[1], 987, t[0], WHT, 'middle'); L(b, t[1], 976, t[1], 979, WHT);
  });
  Box(b, 9, 979, 31, 16, WHT, '1-8-25');
  Box(b, 189, 979, 24, 16, WHT, '8-26');
  T(b, 223, 987, '0:45');
  Box(b, 241, 979, 139, 16, WHT, 'Thu 2021-08-26  02:30:00');
  R(b, 948, 960, 38, 8, '#00c000');
  T(b, 967, 964, '8433.0', '#000', 'middle');
  Box(b, 948, 968, 38, 14, WHT, '-8450.2');
  Box(b, 967, 983, 19, 12, '#00c000', '10', WHT);

  /* ---------- Chart C: MNQU1 ---------- */
  var c = document.getElementById('cc');
  var cData = map([[1450,805],[1460,818],[1475,815],[1490,800],[1497,870],[1515,875],[1530,893],[1550,880],[1565,865]], 640, 2.45, 0)
    .concat(map([[0,865],[20,890],[40,870],[60,878],[80,880],[100,878],[120,870],[140,870],[160,875],[180,825],[200,810],[235,815],[255,850],[275,860],[285,915],[300,945],[320,955],[335,870],[350,855],[370,828],[400,825],[430,835],[450,855],[470,895],[490,880],[510,880],[530,870],[550,850],[580,850],[600,830],[630,820],[640,760],[655,790],[675,800],[695,790],[730,783],[740,893],[760,873],[780,860],[800,835],[810,760],[830,835],[850,765],[865,765]], 1280, 2.39, 0))
    .concat(map([[915,18],[945,60],[960,10]], 1230, 2.22, 340))
    .concat(map([[925,978],[945,920],[965,1005],[985,915],[1000,800],[1020,795],[1040,810],[1060,840],[1075,835],[1100,930],[1115,860],[1135,870],[1150,875],[1155,995],[1175,945],[1190,970],[1210,970]], 1280, 2.39, 0))
    .concat(map([[1238,25],[1255,118],[1270,118],[1275,60],[1295,82],[1310,130],[1325,100],[1340,105],[1365,85]], 1230, 2.22, 340));
  candles(c, dense(cData));
  R(c, 1004, 391, 851, 143, '#000');
  R(c, 1229, 149, 31, 16, '#00c000'); T(c, 1231, 157, ': 6.00', '#000');
  R(c, 1260, 149, 70, 16, RED); T(c, 1295, 157, 'DChg: -81.00', '#000', 'middle');
  T(c, 1332, 157, '16:42:39 H: 15283.50 L: 15275.75 DV: 780025 Pivot Points-Daily');
  T(c, 1666, 157, 'R1: 15376.33', RED); T(c, 1738, 157, 'R2: 15426.42', RED);
  T(c, 1809, 157, 'S1: 15296.83', GRN);
  R(c, 1855, 148, 58, 386, '#000');
  L(c, 1229, 192, 1311, 192, RED); L(c, 1311, 208, 1847, 208, RED);
  L(c, 1229, 258, 1311, 258, MAG); L(c, 1311, 258, 1847, 258, MAG);
  L(c, 1229, 319, 1311, 319, GRN); L(c, 1311, 343, 1847, 343, GRN);
  L(c, 1314, 165, 1314, 512, '#909090', '3 3');
  L(c, 1394, 148, 1394, 512, WHT);
  T(c, 1825, 200, 'R1', RED, 'start', 'ct-l'); T(c, 1825, 249, 'PP', MAG, 'start', 'ct-l'); T(c, 1825, 334, 'S1', GRN, 'start', 'ct-l'); T(c, 1825, 385, 'S2', GRN, 'start', 'ct-l');
  L(c, 1229, 390, 1825, 390, WHT); L(c, 1847, 390, 1855, 390, WHT);
  T(c, 1230, 400, 'BV]  15 Min   #4'); T(c, 1313, 400, 'Difference: -14137.50', GRN); T(c, 1433, 400, '(Last, No, #4, 2, 10, 0, No)');
  poly(c, map([[0,378],[20,370],[30,375],[48,400],[65,380],[100,405],[120,385],[155,420],[165,424],[200,425],[220,430],[240,430],[260,418],[280,415],[297,400],[315,415],[333,385],[360,415],[385,452],[403,424],[420,428],[440,452],[460,452],[475,460],[495,450],[510,450],[528,438],[547,452],[565,442],[580,446],[598,482],[615,448],[635,472],[650,464],[670,458],[690,440],[705,442],[725,475],[742,488],[760,481],[778,484],[795,460],[810,462],[830,472],[848,462],[865,355],[890,372],[918,400],[938,310],[953,258],[973,310],[990,295],[1008,318],[1025,283],[1042,293],[1080,265],[1095,270],[1115,300],[1132,277],[1150,292],[1185,208],[1203,208],[1255,244],[1270,225],[1310,213],[1327,258],[1345,283],[1360,270]], 1230, 2.22, 340));
  L(c, 1229, 512, 1855, 512, WHT);
  L(c, 1855, 148, 1855, 533, WHT);
  L(c, 1229, 528, 1855, 528, WHT);
  [['22:15',1258],['5:00',1473],['6:00',1506],['7:00',1538],['8:00',1570],['9:00',1602],['10:15',1642],['11:30',1682],['12:45',1722],['14:00',1762],['15:15',1802],['16:30',1842]].forEach(function (t) {
    L(c, t[1], 512, t[1], 516, WHT); T(c, t[1], 524, t[0], WHT, 'middle');
  });
  Box(c, 1302, 518, 21, 15, WHT, '8-26');
  Box(c, 1323, 518, 140, 15, WHT, 'Thu 2021-08-26  02:30:00');
  [['15400.00',168],['15380.00',199],['15360.00',237],['15340.00',271],['15320.00',304],['15300.00',337],['15280.00',372],['-14120.00',416],['-14160.00',446],['-14200.00',475],['-14240.00',505],['-14280.00',520]].forEach(function (t) {
    L(c, 1855, t[1], 1859, t[1], WHT); T(c, 1861, t[1], t[0]);
  });
  Box(c, 1859, 200, 47, 16, RED, '15376.33');
  Box(c, 1859, 250, 47, 16, MAG, '15346.92');
  Box(c, 1859, 336, 47, 15, GRN, '15296.83');
  Box(c, 1860, 361, 46, 16, WHT, '15282.50');
  Box(c, 1859, 385, 47, 14, GRN, '15267.42');
  Box(c, 1859, 422, 51, 15, GRN, '-14137.50');
  R(c, 1899, 517, 12, 13, '#00c000');
  Box(c, 1860, 522, 40, 12, WHT, '-14271.52');

  /* ---------- Chart D: MYMU1 ---------- */
  var d = document.getElementById('cd');
  var dData = map([[10,38],[30,20],[60,20],[85,40],[100,67],[120,60],[145,35],[160,67],[190,35],[215,33],[240,22],[265,15],[300,30],[350,12],[370,48],[400,45],[440,68],[455,65],[475,20]], 1240, 2.253, 700)
    .concat(map([[495,1068],[510,1060],[530,1040],[550,1040],[575,1045],[600,1075],[650,1065],[680,1050],[720,1040],[750,1045],[770,1010],[795,990],[830,985],[850,1025],[880,1010],[900,995],[935,1010],[950,1025],[970,990],[990,1060]], 1230, 2.22, 340))
    .concat(map([[960,15],[985,115],[1000,155],[1020,88],[1040,78],[1060,100],[1085,112],[1095,60],[1110,90],[1130,97],[1145,103],[1160,90],[1180,170],[1195,110],[1215,155],[1230,147],[1235,240],[1250,232],[1270,232],[1285,228],[1290,265],[1305,300],[1320,297],[1345,300],[1360,318],[1375,315],[1380,280],[1400,265],[1420,262]], 1240, 2.253, 700));
  candles(d, dense(dData));
  L(d, 1676, 690, 1676, 752, RED); L(d, 1664, 700, 1664, 755, RED); L(d, 1666, 640, 1666, 700, RED);
  R(d, 1229, 592, 62, 16, RED); T(d, 1260, 600, 'DChg: -216', '#000', 'middle');
  T(d, 1294, 600, '16:42:36 H: 35197 L: 35185 DV: 103147 Pivot Points-Daily');
  T(d, 1598, 600, 'R1: 35439', RED); T(d, 1655, 600, 'R2: 35550', RED); T(d, 1712, 600, 'S1: 35222', GRN); T(d, 1769, 600, 'S2: 35116', GRN); T(d, 1826, 600, 'R.5: 35380', RED);
  R(d, 1875, 592, 40, 410, '#000');
  L(d, 1229, 637, 1336, 637, RED); L(d, 1336, 649, 1872, 649, RED);
  L(d, 1229, 690, 1336, 690, RED);
  L(d, 1229, 722, 1336, 722, MAG); L(d, 1336, 708, 1872, 708, MAG);
  L(d, 1229, 774, 1336, 774, GRN); L(d, 1336, 770, 1872, 770, GRN);
  L(d, 1229, 806, 1336, 806, GRN); L(d, 1336, 829, 1872, 829, GRN);
  L(d, 1339, 608, 1339, 978, '#909090', '3 3');
  L(d, 1419, 592, 1419, 978, WHT);
  T(d, 1850, 641, 'R1', RED, 'start', 'ct-l'); T(d, 1850, 699, 'PP', MAG, 'start', 'ct-l'); T(d, 1850, 761, 'S1', GRN, 'start', 'ct-l'); T(d, 1850, 820, 'S2', GRN, 'start', 'ct-l');
  T(d, 1229, 859, 'BV]  15 Min   #9'); T(d, 1314, 859, 'Difference: -4755', GRN); T(d, 1412, 859, '(Last, No, #9, 0.5, 5, 0, No)');
  poly(d, map([[-25,712],[0,710],[30,705],[55,700],[80,685],[100,690],[135,692],[155,688],[175,700],[190,690],[205,693],[225,686],[250,685],[280,693],[298,690],[320,705],[360,706],[385,700],[405,682],[430,670],[440,672],[460,693],[480,680],[497,688],[515,678],[535,663],[550,668],[600,665],[620,661],[640,667],[695,667],[715,677],[730,670],[750,685],[785,663],[805,665],[820,677],[840,620],[875,616],[893,632],[930,583],[947,607],[965,543],[985,540],[1002,577],[1020,585],[1038,604],[1055,587],[1075,640],[1090,672],[1110,688],[1145,670],[1165,688],[1190,682],[1218,673],[1236,653],[1255,682],[1290,662],[1308,650],[1340,652],[1365,633],[1380,628],[1398,648],[1415,652]], 1240, 2.253, 700));
  L(d, 1004, 978, 1875, 978, WHT); L(d, 1004, 979, 1875, 979, WHT);
  L(d, 1875, 592, 1875, 980, WHT);
  Box(d, 1004, 983, 33, 17, WHT, '1-8-25');
  [['14:15',1059],['15:30',1099],['16:45',1139],['19:00',1179],['20:15',1218],['21:30',1259],['22:45',1299],['5:00',1499],['6:00',1531],['7:00',1563],['8:00',1595],['9:00',1627],['10:15',1667],['11:30',1707],['12:45',1747],['14:00',1787],['15:15',1827],['16:30',1867]].forEach(function (t) {
    L(d, t[1], 979, t[1], 982, WHT); T(d, t[1], 992, t[0], WHT, 'middle');
  });
  Box(d, 1327, 984, 21, 16, WHT, '8-26');
  Box(d, 1350, 984, 138, 16, WHT, 'Thu 2021-08-26  02:30:00');
  [['35500',616],['35450',641],['35400',672],['35350',697],['35300',727],['35250',755],['35150',811],['35100',839],['-4720',875],['-4760',925],['-4800',969]].forEach(function (t) {
    L(d, 1875, t[1], 1878, t[1], WHT); T(d, 1880, t[1], t[0]);
  });
  Box(d, 1879, 642, 32, 15, RED, '35439');
  Box(d, 1879, 701, 32, 15, MAG, '35333');
  Box(d, 1879, 762, 32, 15, GRN, '35222');
  Box(d, 1879, 779, 32, 16, WHT, '35192');
  Box(d, 1879, 821, 32, 16, GRN, '35116');
  Box(d, 1879, 910, 30, 15, GRN, '-4755');
  Box(d, 1880, 970, 29, 15, WHT, '-4805');
  Box(d, 1901, 983, 13, 14, '#00c000', '7', WHT);

  /* ---------- Ladders ---------- */
  function nxSpan(text, extra) {
    var s = document.createElement('span');
    s.className = 'nx ' + (extra || '');
    s.textContent = text;
    return s;
  }
  function cell(row, cls, text, origin) {
    var e = document.createElement('div');
    e.className = cls;
    if (text != null) e.appendChild(nxSpan(text, origin));
    row.appendChild(e);
    return e;
  }
  var myBars = [[29,54],[21,40],[14,30],[18,33],[11,26],[14,30],[21,40],[24,64],[26,45],[11,31],[13,25],[14,30],[13,25],[14,30],[20,45],[17,38],[17,36],[16,40],[21,42],[19,35],[34,52],[17,36],[16,34],[18,34],[11,21],[16,30],[17,29],[15,35],[26,61],[16,36],[17,41],[28,48],[22,40],[28,51],[22,58],[26,47],[28,50],[18,34],[24,49],[27,55],[26,52],[25,54],[22,42],[16,33]];
  var mySell = { 35202: ['63', 1], 35201: ['4'], 35200: ['10'], 35199: ['11'], 35198: ['5'], 35197: ['8'], 35196: ['7'], 35195: ['6'], 35194: ['6'], 35193: ['5'], 35192: ['1'] };
  var myBuy = { 35191: '1', 35190: '5', 35189: '6', 35188: '4', 35187: '7', 35186: '5', 35185: '5', 35184: '6', 35183: '5', 35182: '6', 35181: '50' };
  var myVol = { 35197: 4, 35196: 3, 35195: 9, 35194: 15, 35193: 28, 35192: 1, 35191: 15, 35190: 8, 35189: 16, 35188: 26, 35187: 12, 35186: 13, 35185: 10 };
  var lm = document.getElementById('ladmy');
  myBars.forEach(function (bar, i) {
    var p = 35208 - i;
    var r = document.createElement('div');
    r.className = 'row ' + (p >= 35192 ? 'a' : 'b') + (i === 0 ? ' first' : '');
    var bars = cell(r, 'bars');
    var rb = document.createElement('i'); rb.className = 'r'; rb.style.width = bar[0] + 'px'; bars.appendChild(rb);
    var gb = document.createElement('i'); gb.className = 'g'; gb.style.width = (bar[1] - bar[0]) + 'px'; bars.appendChild(gb);
    cell(r, 'c-buy' + (p === 35181 ? ' dark' : ''), myBuy[p], 'nx-r');
    cell(r, 'c-price' + (p === 35192 ? ' hot' : '') + (i === 0 ? ' clip' : ''), p);
    var s = mySell[p];
    cell(r, 'c-sell' + (s && s[1] ? ' dark' : ''), s ? s[0] : null, 'nx-l');
    cell(r, 'c-last' + (p === 35192 ? ' fill-g' : ''), p === 35192 ? 1 : null);
    cell(r, 'c-vol' + (p === 35192 ? ' fill-g' : ''), myVol[p]);
    lm.appendChild(r);
  });

  var esBuy = { '4470.25': 17, '4470.00': 30, '4469.75': 33, '4469.50': 44, '4469.25': 37, '4469.00': 46, '4468.75': 45, '4468.50': 47, '4468.25': 59, '4468.00': 51, '4467.75': 409 };
  var esSell = { '4473.00': 497, '4472.75': 51, '4472.50': 53, '4472.25': 48, '4472.00': 71, '4471.75': 45, '4471.50': 49, '4471.25': 36, '4471.00': 68, '4470.75': 45, '4470.50': 31 };
  var esVol = { '4470.50': 176, '4470.25': 1, '4470.00': 209, '4469.75': 92, '4469.50': 127, '4469.25': 1 };
  var le = document.getElementById('lades');
  function esRow(key, cls) {
    var r = document.createElement('div');
    var hot = key === '4470.25';
    r.className = 'row ' + cls;
    cell(r, 'c-gap');
    cell(r, 'c-buy' + (key === '4467.75' ? ' dark' : ''), esBuy[key], 'nx-r');
    cell(r, 'c-price' + (hot ? ' hot' : ''), key || null);
    cell(r, 'c-sell' + (key === '4473.00' ? ' dark' : ''), esSell[key], 'nx-l');
    cell(r, 'c-last' + (hot ? ' fill-r' : ''), hot ? 1 : null);
    cell(r, 'c-vol' + (hot ? ' fill-r' : ''), esVol[key]);
    le.appendChild(r);
  }
  esRow('', 'a part');
  for (var n = 0; n < 43; n++) {
    var v = 4476 - n * 0.25;
    esRow(v.toFixed(2), v >= 4470.5 ? 'a' : 'b');
  }
  esRow('', 'b part');

  /* wrap the condensed labels of the buttons and headings */
  function wrap(sel, origin) {
    document.querySelectorAll(sel).forEach(function (n) {
      if (!n.firstChild) return;
      var s = document.createElement('span');
      s.className = 'nx ' + (origin || '');
      while (n.firstChild) s.appendChild(n.firstChild);
      n.appendChild(s);
    });
  }
  wrap('.tools button');
  wrap('.tbtn');
  wrap('.lh-buy, .lh-sell, .lh-last, .lh-vol', 'nx-l');
  wrap('.ctab', 'nx-l');
})();
```
